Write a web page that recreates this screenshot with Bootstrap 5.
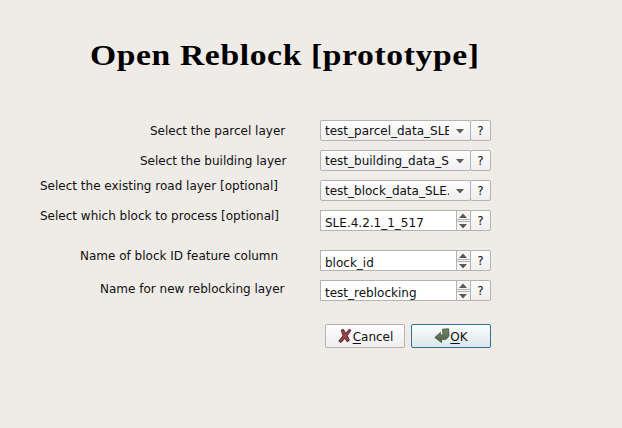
<!DOCTYPE html>
<html lang="en">
<head>
<meta charset="utf-8">
<title>Open Reblock</title>
<link href="https://cdn.jsdelivr.net/npm/bootstrap@5.3.0/dist/css/bootstrap.min.css" rel="stylesheet">
<style>
body{background:#efebe7;color:#101010;font:12px/21px "DejaVu Sans",sans-serif;width:622px;height:428px;overflow:hidden}
.dialog-title{font:bold 30px/40px "Liberation Serif",serif;color:#000;padding:35px 0 45px 90px;white-space:nowrap}
.dialog-title span{display:inline-block;letter-spacing:.56px;transform:scaleX(1.12);transform-origin:0 50%}
.field-row{height:21px;margin-bottom:9px}
.field-row.gap-after{margin-bottom:19px}
.field-label{width:320px;line-height:23px;white-space:pre}
.from-40{padding-left:40px}.from-80{padding-left:80px}.from-100{padding-left:100px}.from-140{padding-left:140px}.from-150{padding-left:150px}
.raise-5{margin-top:-5px}.raise-2{margin-top:-2px}
.face{background:linear-gradient(#fdfdfd,#efefef);border:1px solid #b4b3b2;border-radius:2px;color:#101010}
.combo{width:151px;height:21px;padding:0 6px 0 4px}
.combo-text{width:124px;line-height:20px;overflow:hidden;white-space:nowrap}
.help{width:21px;height:21px;margin-left:-1px;padding:1px 0 0;font-size:12px;line-height:18px;text-align:center}
.entry{width:137px;height:21px;border:1px solid #b4b3b2;background:#fff;padding-left:4px;line-height:25px;overflow:hidden;white-space:nowrap}
.spin{width:14px;height:21px;border:solid #b4b3b2;border-width:1px 0;background:#f5f4f3}
.spin svg{display:block}
.actions{margin-left:325px;padding-top:14px;gap:6px}
.action{width:80px;height:24px;font-size:12px;line-height:22px;padding:0}
.action span{padding-top:2px}
.action u{text-underline-offset:2px;text-decoration-thickness:1px}
.action.primary{background:linear-gradient(#fbfdfd,#dbe6e8);border-color:#307396}
</style>
<script src="https://cdn.jsdelivr.net/npm/bootstrap@5.3.0/dist/js/bootstrap.bundle.min.js"></script>
</head>
<body>
<svg class="d-none" xmlns="http://www.w3.org/2000/svg">
<symbol id="steps" viewBox="0 0 14 19"><path d="M0 8.5h14M0 10.5h14" stroke="#b4b3b2"/><path d="M2 7l4-4.6L10 7zM2 13h8l-4 4.6z" fill="#595959"/></symbol>
</svg>
<main>
<h1 class="dialog-title m-0"><span>Open Reblock [prototype]</span></h1>
<div class="field-row d-flex"><label class="field-label from-150">Select the parcel layer</label><div class="combo face d-flex align-items-start justify-content-between"><span class="combo-text">test_parcel_data_SLE</span><svg width="8" height="19"><path d="M0 8h8l-4 4.6z" fill="#595959"/></svg></div><button class="help face">?</button></div>
<div class="field-row d-flex"><label class="field-label from-140">Select the building layer</label><div class="combo face d-flex align-items-start justify-content-between"><span class="combo-text">test_building_data_S</span><svg width="8" height="19"><path d="M0 8h8l-4 4.6z" fill="#595959"/></svg></div><button class="help face">?</button></div>
<div class="field-row d-flex"><label class="field-label from-40 raise-5">Select the existing road layer [optional]</label><div class="combo face d-flex align-items-start justify-content-between"><span class="combo-text">test_block_data_SLE.</span><svg width="8" height="19"><path d="M0 8h8l-4 4.6z" fill="#595959"/></svg></div><button class="help face">?</button></div>
<div class="field-row gap-after d-flex"><label class="field-label from-40 raise-5">Select which block to process [optional]</label><div class="entry">SLE.4.2.1_1_517</div><div class="spin"><svg width="14" height="19"><use href="#steps"/></svg></div><button class="help face">?</button></div>
<div class="field-row d-flex"><label class="field-label from-80 raise-5">Name of block ID feature column</label><div class="entry">block_id</div><div class="spin"><svg width="14" height="19"><use href="#steps"/></svg></div><button class="help face">?</button></div>
<div class="field-row d-flex"><label class="field-label from-100 raise-2">Name for new reblocking layer</label><div class="entry">test_reblocking</div><div class="spin"><svg width="14" height="19"><use href="#steps"/></svg></div><button class="help face">?</button></div>
<div class="actions d-flex">
<button class="action face d-flex align-items-center justify-content-center"><svg width="16" height="16" viewBox="0 0 16 16"><path d="M4.2 2.2 6.6 1.6 8.7 5.6 12.2 1.3 14 2.3 10.3 7.6 12.4 12.2 10.2 13.8 7.8 10.2 4.2 14.4 1.8 13.1 6.1 7.8z" fill="#a34148" stroke="#45282a" stroke-width="1" stroke-linejoin="round"/></svg><span><u>C</u>ancel</span></button>
<button class="action primary face d-flex align-items-center justify-content-center"><svg width="16" height="16" viewBox="0 0 16 16"><defs><linearGradient id="leaf" x2="0" y2="1"><stop stop-color="#728868"/><stop offset="1" stop-color="#4b6042"/></linearGradient></defs><path d="M8.6 1.2 14.6.8 15 8 12.2 11.2 7.4 11.5 7.6 14.6.8 9.5 6.4 4.5 6.8 7.4 9 7z" fill="url(#leaf)" stroke="#3d4b38" stroke-width=".8" stroke-linejoin="round"/></svg><span><u>O</u>K</span></button>
</div>
</main>
</body>
</html>
